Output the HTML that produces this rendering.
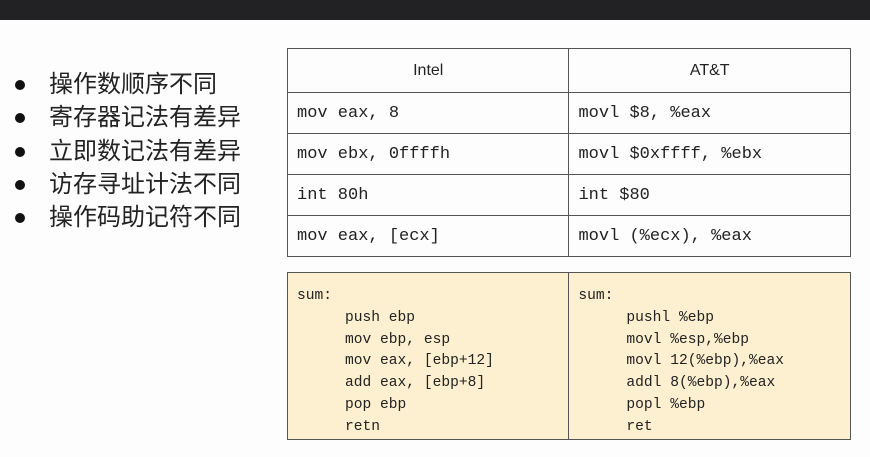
<!DOCTYPE html>
<html><head><meta charset="utf-8"><style>
body{margin:0;width:870px;height:457px;background:#fdfdfd;position:relative;overflow:hidden;font-family:"Liberation Sans","Noto Sans CJK SC",sans-serif}
.bar{position:absolute;left:0;top:0;width:870px;height:20px;background:#222124}
.b{position:absolute;left:12px;font-size:24px;color:#222;line-height:33px}
.b div{position:relative;padding-left:37px;height:33.3px}
.b div:before{content:"";position:absolute;left:3px;top:12px;width:10px;height:10px;border-radius:50%;background:#111}
table{position:absolute;border-collapse:collapse}
td{border:1px solid #555;padding:0 0 0 9px;font-family:"Liberation Mono",monospace;font-size:17px;color:#222}
#t1{left:287px;top:48px;width:564px}
#t1 td{width:272px;height:40px}
#t1 tr:first-child td{font-family:"Liberation Sans",sans-serif;text-align:center;padding:0;height:43px;font-size:16px}
#t2{left:287px;top:272px;width:564px;background:#fdf0d0}
#t2 td{vertical-align:top;width:272px;height:151px;font-size:14.6px;line-height:21.8px;padding-top:13px;padding-left:9px}
.i{padding-left:48px;display:block}
</style></head><body>
<div class="bar"></div>
<div class="b" style="top:68px">
<div>操作数顺序不同</div><div>寄存器记法有差异</div><div>立即数记法有差异</div><div>访存寻址计法不同</div><div>操作码助记符不同</div>
</div>
<table id="t1">
<tr><td>Intel</td><td>AT&amp;T</td></tr>
<tr><td>mov eax, 8</td><td>movl $8, %eax</td></tr>
<tr><td>mov ebx, 0ffffh</td><td>movl $0xffff, %ebx</td></tr>
<tr><td>int 80h</td><td>int $80</td></tr>
<tr><td>mov eax, [ecx]</td><td>movl (%ecx), %eax</td></tr>
</table>
<table id="t2"><tr>
<td>sum:<span class="i">push ebp</span><span class="i">mov ebp, esp</span><span class="i">mov eax, [ebp+12]</span><span class="i">add eax, [ebp+8]</span><span class="i">pop ebp</span><span class="i">retn</span></td>
<td>sum:<span class="i">pushl %ebp</span><span class="i">movl %esp,%ebp</span><span class="i">movl 12(%ebp),%eax</span><span class="i">addl 8(%ebp),%eax</span><span class="i">popl %ebp</span><span class="i">ret</span></td>
</tr></table>
</body></html>
